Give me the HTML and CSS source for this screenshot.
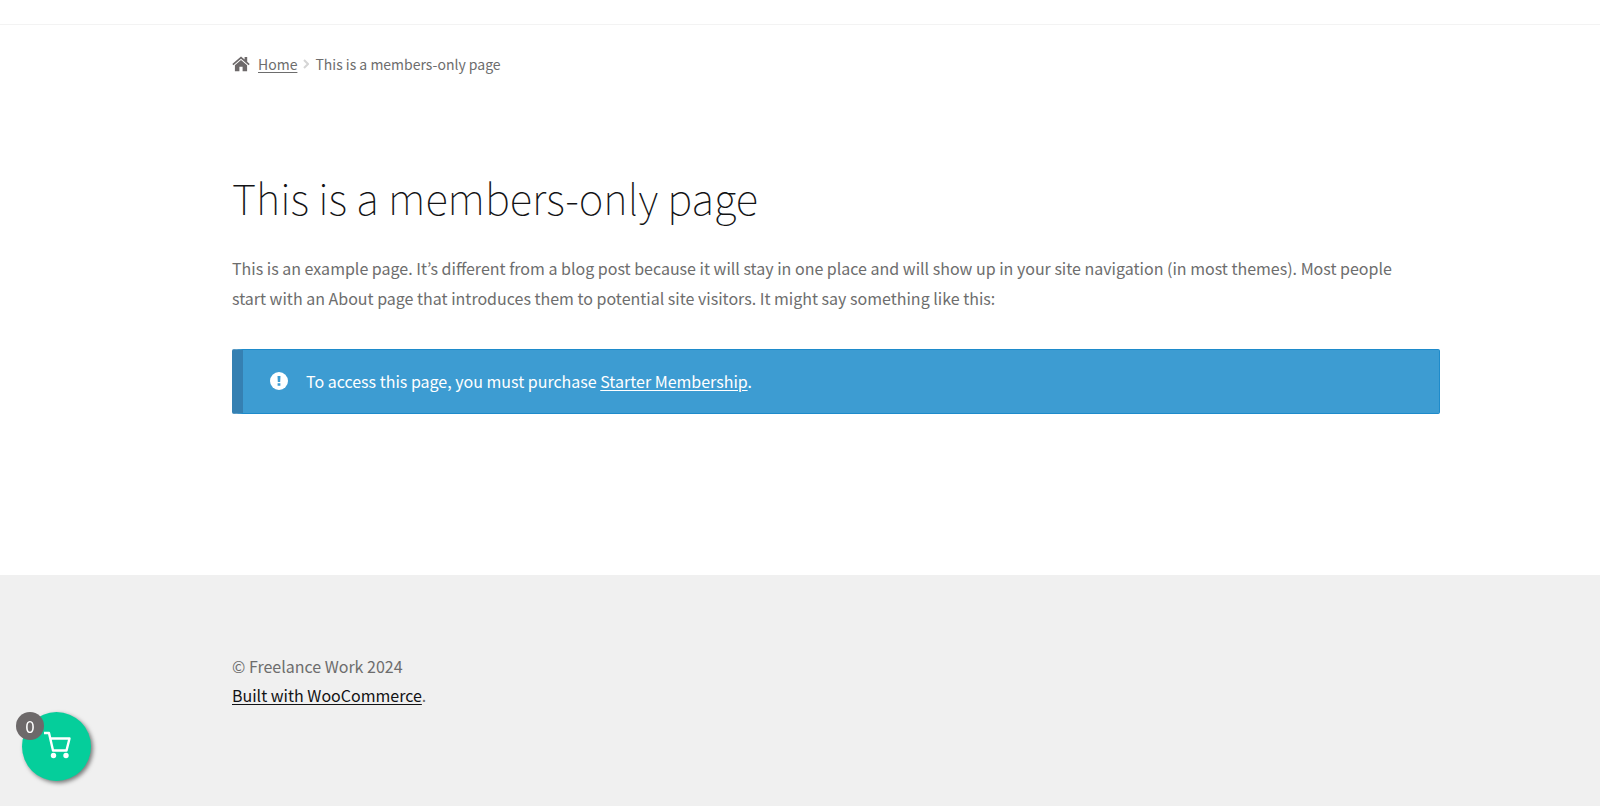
FILE: index.html
```
<!DOCTYPE html>
<html lang="en">
<head>
    <meta charset="UTF-8">
    <meta name="viewport" content="width=device-width, initial-scale=1.0">
    <title>This is a members-only page - Freelance Work</title>
    <link rel="stylesheet" href="styles.css">
</head>
<body>
    <header class="site-header"></header>

    <main class="site-content">
        <nav class="breadcrumb" aria-label="Breadcrumb">
            <svg class="home-icon" viewBox="0 0 18 16" aria-hidden="true">
                <path d="M9 0.5 0.3 8l1.1 1.2L9 2.7l7.6 6.5L17.7 8l-2.5-2.2V0.9h-2.6v2.7z"/>
                <path d="M9 4.1 2.9 9.3v5.9h4.5v-4.4h3.2v4.4h4.5V9.3z"/>
            </svg>
            <a href="#">Home</a>
            <svg class="separator" viewBox="0 0 6 10" aria-hidden="true">
                <path d="M1 1l4 4-4 4"/>
            </svg>
            <span>This is a members-only page</span>
        </nav>

        <article>
            <h1>This is a members-only page</h1>
            <p>This is an example page. It’s different from a blog post because it will stay in one place and will show up in your site navigation (in most themes). Most people start with an About page that introduces them to potential site visitors. It might say something like this:</p>
            <div class="notice">
                <svg class="notice-icon" viewBox="0 0 18 18" aria-hidden="true">
                    <circle cx="9" cy="9" r="9"/>
                    <path d="M7.5 4h3l-.3 6H7.8zM7.6 11.2h2.8v2.6H7.6z"/>
                </svg>
                <div>To access this page, you must purchase <a href="#">Starter Membership</a>.</div>
            </div>
        </article>
    </main>

    <footer class="site-footer">
        <div>© Freelance Work 2024</div>
        <div><a href="#">Built with WooCommerce</a>.</div>
    </footer>

    <button class="cart" aria-label="Cart, 0 items">
        <svg viewBox="0 0 28 28" aria-hidden="true">
            <path d="M1 2h5l4 17.5h13.5l3-12H7.5"/>
            <circle cx="10.5" cy="24.5" r="2.7"/>
            <circle cx="23" cy="24.5" r="2.7"/>
        </svg>
        <span class="cart-count">0</span>
    </button>
</body>
</html>
```
FILE: styles.css
```
* { box-sizing: border-box; }
body { margin: 0; min-height: 100vh; display: flex; flex-direction: column; background: #fff; color: #6d6d6d; font-family: "Source Sans Pro", "Noto Sans CJK KR", sans-serif; font-size: 16px; line-height: 30px; }
p { margin: 0; padding-right: 16px; }

.site-header { height: 25px; border-bottom: 1px solid #f3f3f3; }
.site-content, .site-footer { padding-left: 14.5%; padding-right: 10%; }
.site-content { padding-bottom: 161px; }

.breadcrumb { display: flex; align-items: center; padding: 24px 0 85px; font-size: 14px; }
.breadcrumb a { color: #6d6d6d; text-underline-offset: 2px; }
.home-icon { width: 18px; height: 16px; margin-right: 8px; fill: #6d696a; }
.separator { width: 6px; height: 10px; margin: 0 6px; fill: none; stroke: #d5d5d5; stroke-width: 2; }

h1 { margin: 0 0 23px; color: #131315; font-size: 42px; font-weight: 100; line-height: 66px; }

.notice { display: flex; align-items: center; gap: 18px; margin-top: 36px; padding: 16px 32px 17px 27px; border: 1px solid #1e8bcb; border-left: 11px solid #3580b2; border-radius: 2px; background: #3d9cd2; color: #fff; }
.notice a { color: #fff; text-underline-offset: 2px; }
.notice-icon { width: 18px; height: 18px; fill: #fff; }
.notice-icon path { fill: #3d9cd2; }

.site-footer { flex: 1; padding-top: 77px; padding-bottom: 77px; background: #f0f0f0; line-height: 29px; }
.site-footer a { color: #131315; text-underline-offset: 2px; }

.cart { position: fixed; left: 22px; bottom: 25px; width: 69px; height: 69px; padding: 0 0 4px; border: none; border-radius: 50%; background: #05ce9b; box-shadow: 2px 2px 4px rgba(0, 0, 0, 0.5); cursor: pointer; }
.cart svg { display: block; width: 28px; height: 28px; margin: 0 auto; fill: #fff; }
.cart path { fill: none; stroke: #fff; stroke-width: 2.4; stroke-linejoin: round; }
.cart-count { position: absolute; top: 0; left: -6px; width: 28px; height: 28px; border-radius: 50%; background: #6d696a; color: #fff; font-family: "Source Sans Pro", "Noto Sans CJK KR", sans-serif; font-size: 17px; line-height: 28px; }
```
